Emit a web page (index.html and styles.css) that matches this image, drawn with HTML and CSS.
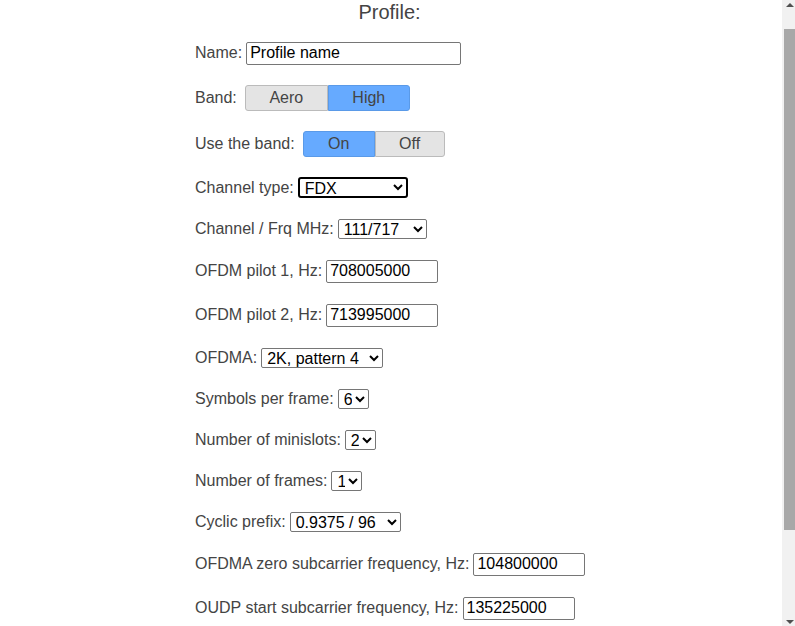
FILE: index.html
```html
<!DOCTYPE html>
<html>
<head>
<meta charset="utf-8">
<link rel="stylesheet" href="styles.css">
</head>
<body>
<div class="main">
  <div class="page">
    <h2 class="title">Profile:</h2>
    <div class="form">
      <div class="row r-in"><span class="lbl">Name:</span><input class="txt w-name" type="text" value="Profile name"></div>
      <div class="row btn-row"><span class="lbl">Band:</span>
        <div class="seg"><button class="seg-btn w-aero">Aero</button><button class="seg-btn on w-high">High</button></div>
      </div>
      <div class="row btn-row"><span class="lbl">Use the band:</span>
        <div class="seg"><button class="seg-btn on w-on">On</button><button class="seg-btn w-off">Off</button></div>
      </div>
      <div class="row r-sel"><span class="lbl">Channel type:</span><select class="sel focus w-type"><option>FDX</option></select></div>
      <div class="row r-sel"><span class="lbl">Channel / Frq MHz:</span><select class="sel w-chan"><option>111/717</option></select></div>
      <div class="row r-in"><span class="lbl">OFDM pilot 1, Hz:</span><input class="txt w-num" type="text" value="708005000"></div>
      <div class="row r-in"><span class="lbl">OFDM pilot 2, Hz:</span><input class="txt w-num" type="text" value="713995000"></div>
      <div class="row r-sel"><span class="lbl">OFDMA:</span><select class="sel w-ofdma"><option>2K, pattern 4</option></select></div>
      <div class="row r-sel"><span class="lbl">Symbols per frame:</span><select class="sel w-small"><option>6</option></select></div>
      <div class="row r-sel"><span class="lbl">Number of minislots:</span><select class="sel w-small"><option>2</option></select></div>
      <div class="row r-sel"><span class="lbl">Number of frames:</span><select class="sel w-small"><option>1</option></select></div>
      <div class="row r-sel"><span class="lbl">Cyclic prefix:</span><select class="sel w-cyc"><option>0.9375 / 96</option></select></div>
      <div class="row r-in"><span class="lbl">OFDMA zero subcarrier frequency, Hz:</span><input class="txt w-num" type="text" value="104800000"></div>
      <div class="row r-in"><span class="lbl">OUDP start subcarrier frequency, Hz:</span><input class="txt w-num" type="text" value="135225000"></div>
    </div>
  </div>
</div>
<div class="scrollbar">
  <div class="arrow up"></div>
  <div class="track"><div class="thumb"></div></div>
  <div class="arrow down"></div>
</div>
</body>
</html>
```
FILE: styles.css
```css
html, body {
  margin: 0;
  padding: 0;
  background: #fff;
  height: 626px;
  overflow: hidden;
}
body {
  display: flex;
  font-family: "Liberation Sans", Arial, sans-serif;
  font-size: 16px;
  color: #444;
}
.main {
  flex: 1;
  height: 626px;
  overflow: hidden;
}
.page {
  width: 392px;
  margin: 0 auto;
  padding-top: 1px;
}
.title {
  margin: 0 0 0 -3px;
  font-size: 20px;
  font-weight: normal;
  line-height: 23px;
  text-align: center;
  color: #444;
}
.form {
  display: flex;
  flex-direction: column;
  gap: 20px;
  margin-top: 17px;
}
.row {
  display: flex;
  align-items: center;
  gap: 4px;
  white-space: nowrap;
}
.r-in { min-height: 24px; }
.r-sel { min-height: 21px; }
.btn-row {
  gap: 8px;
}
.txt {
  box-sizing: border-box;
  height: 23px;
  font-family: "Liberation Sans", Arial, sans-serif;
  font-size: 16px;
  color: #000;
  border: 1px solid #767676;
  border-radius: 2px;
  padding: 1px 3px;
  margin: 0;
}
.w-name { width: 215px; }
.w-num { width: 112px; }
.sel {
  box-sizing: border-box;
  height: 20px;
  font-family: "Liberation Sans", Arial, sans-serif;
  font-size: 16px;
  color: #000;
  border: 1px solid #767676;
  border-radius: 2px;
  background: #fff;
  padding: 0 0 0 1px;
  margin: 0;
}
.sel.focus {
  border: 2px solid #000;
  border-radius: 3px;
  outline: none;
  height: 21px;
}
.w-type { width: 110px; }
.w-chan { width: 89px; }
.w-ofdma { width: 122px; }
.w-small { width: 31px; }
.w-cyc { width: 111px; }
.seg {
  display: flex;
}
.seg-btn {
  box-sizing: border-box;
  height: 26px;
  margin: 0;
  font-family: "Liberation Sans", Arial, sans-serif;
  font-size: 16px;
  color: #444;
  background: #e4e4e4;
  border: 1px solid #bbb;
  padding: 0;
}
.seg-btn:first-child {
  border-radius: 3px 0 0 3px;
}
.seg-btn:last-child {
  border-radius: 0 3px 3px 0;
}
.seg-btn.on {
  background: #66aaff;
  border-color: #5a9ae8;
}
.w-aero { width: 83px; }
.w-high { width: 82px; }
.w-on { width: 72px; }
.w-off { width: 70px; }

.scrollbar {
  width: 13px;
  height: 626px;
  background: #f1f1f1;
  display: flex;
  flex-direction: column;
  flex-shrink: 0;
}
.arrow {
  height: 15px;
  display: flex;
  justify-content: center;
  align-items: center;
}
.arrow.up::before {
  content: "";
  border-left: 4px solid transparent;
  border-right: 4px solid transparent;
  border-bottom: 4px solid #505050;
  margin-left: 2px;
  margin-top: -6px;
}
.arrow.down::before {
  content: "";
  border-left: 4px solid transparent;
  border-right: 4px solid transparent;
  border-top: 4px solid #505050;
  margin-left: 2px;
  margin-top: 6px;
}
.track {
  flex: 1;
  padding-top: 14px;
  padding-left: 2px;
}
.thumb {
  height: 501px;
  background: #a8a8a8;
}
```
